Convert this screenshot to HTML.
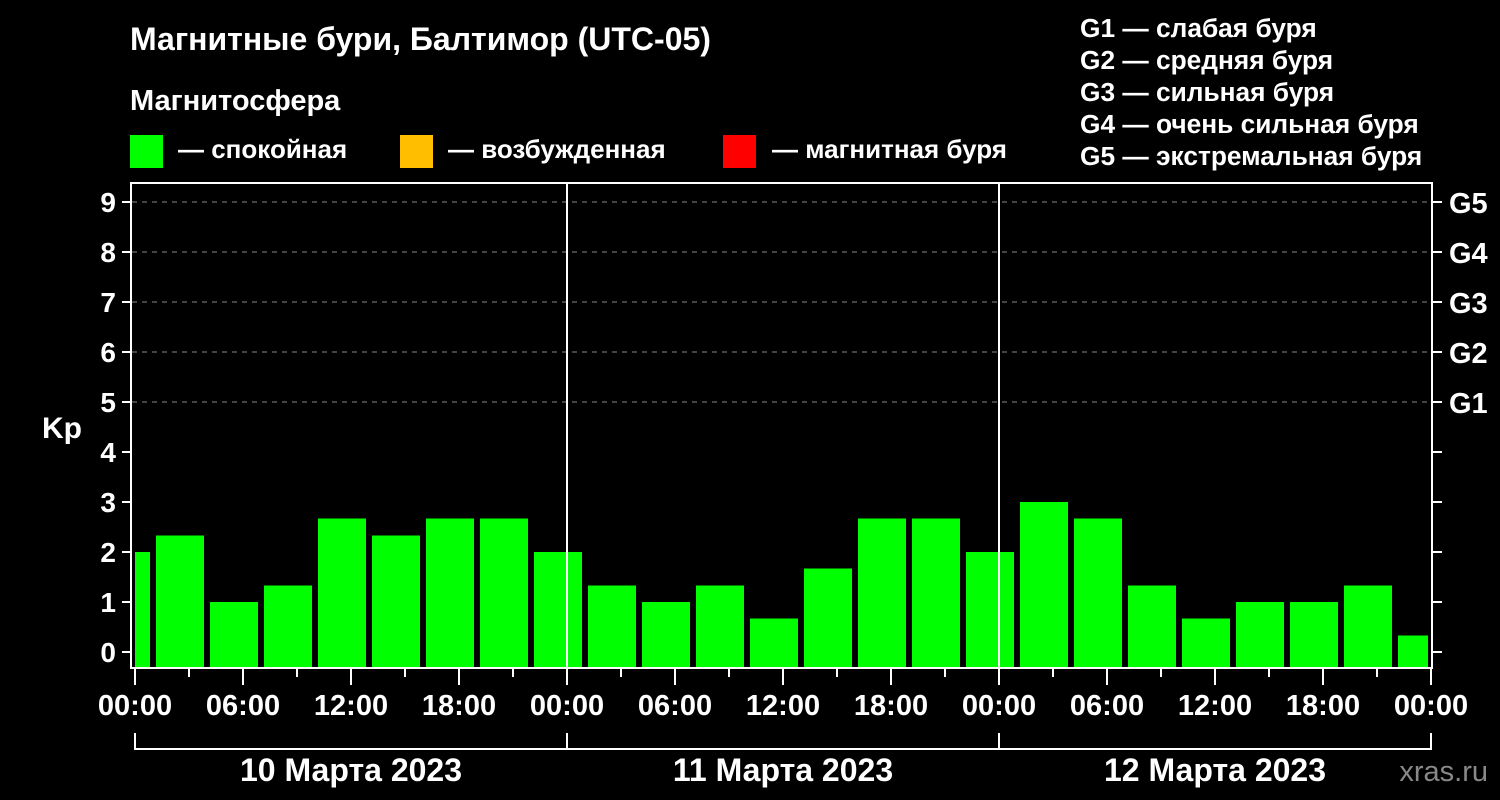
<!DOCTYPE html>
<html><head><meta charset="utf-8"><style>
body{margin:0;background:#000;width:1500px;height:800px;overflow:hidden}
svg{display:block}
text{font-family:"Liberation Sans",sans-serif;font-weight:bold;fill:#fff}
</style></head><body>
<svg width="1500" height="800" viewBox="0 0 1500 800">
<text x="130" y="50" font-size="32">Магнитные бури, Балтимор (UTC-05)</text>
<text x="130" y="110" font-size="29">Магнитосфера</text>
<rect x="130" y="135" width="33" height="33" fill="#00ff00"/>
<text x="178" y="158" font-size="26">— спокойная</text>
<rect x="400" y="135" width="33" height="33" fill="#ffbf00"/>
<text x="448" y="158" font-size="26">— возбужденная</text>
<rect x="723" y="135" width="33" height="33" fill="#ff0000"/>
<text x="772" y="158" font-size="26">— магнитная буря</text>
<g font-size="26.3">
<text x="1080" y="37">G1 — слабая буря</text>
<text x="1080" y="69">G2 — средняя буря</text>
<text x="1080" y="101">G3 — сильная буря</text>
<text x="1080" y="133">G4 — очень сильная буря</text>
<text x="1080" y="165">G5 — экстремальная буря</text>
</g>
<g stroke="#888" stroke-width="1" stroke-dasharray="5,5">
<line x1="132" y1="202" x2="1431" y2="202"/><line x1="132" y1="252" x2="1431" y2="252"/><line x1="132" y1="302" x2="1431" y2="302"/><line x1="132" y1="352" x2="1431" y2="352"/><line x1="132" y1="402" x2="1431" y2="402"/>
</g>
<g fill="#00ff00" id="bars"></g>
<g stroke="#fff" stroke-width="2" fill="none">
<line x1="567" y1="183" x2="567" y2="668"/><line x1="999" y1="183" x2="999" y2="668"/>
<path d="M131,668 V183 H1432 V668 Z"/>
<path d="M135,733 V749 H1431 V733 M567,733 V749 M999,733 V749"/>
</g>
<g id="ticks" stroke="#fff" stroke-width="2"></g>
<g font-size="28" text-anchor="end" id="ly"></g>
<g font-size="29" id="ry"></g>
<g font-size="29" text-anchor="middle" id="xl"></g>
<text x="42" y="438" font-size="30">Kp</text>
<g font-size="32" text-anchor="middle">
<text x="351" y="781">10 Марта 2023</text>
<text x="783" y="781">11 Марта 2023</text>
<text x="1215" y="781">12 Марта 2023</text>
</g>
<text x="1488" y="781" font-size="29" text-anchor="end" style="fill:#888;font-weight:normal">xras.ru</text>
</svg>
<script>
(function(){
var ns="http://www.w3.org/2000/svg";
function el(p,t,a,txt){var e=document.createElementNS(ns,t);for(var k in a)e.setAttribute(k,a[k]);if(txt!=null)e.textContent=txt;document.getElementById(p).appendChild(e);}
var v=[2,2.33,1,1.33,2.67,2.33,2.67,2.67,2,1.33,1,1.33,0.67,1.67,2.67,2.67,2,3,2.67,1.33,0.67,1,1,1.33,0.33];
for(var i=0;i<v.length;i++){var ty=652-50*v[i];var x0,x1;if(i==0){x0=135;x1=150}else{x0=156+54*(i-1);x1=x0+48;if(x1>1428)x1=1428}el("bars","rect",{x:x0,y:ty,width:x1-x0,height:668-ty});}
for(var k=0;k<=9;k++){var y=652-50*k;el("ticks","line",{x1:122,y1:y,x2:131,y2:y});el("ticks","line",{x1:1432,y1:y,x2:1442,y2:y});el("ly","text",{x:116,y:y+10},k);}
for(var g=1;g<=5;g++){el("ry","text",{x:1449,y:402-50*(g-1)+11},"G"+g);}
var lab=["00:00","06:00","12:00","18:00"];
for(var h=0;h<=24;h++){var x=135+54*h;var maj=h%2==0;el("ticks","line",{x1:x,y1:668,x2:x,y2:maj?685:677});if(maj)el("xl","text",{x:x,y:715},lab[(h/2)%4]);}
})();
</script>
</body></html>
